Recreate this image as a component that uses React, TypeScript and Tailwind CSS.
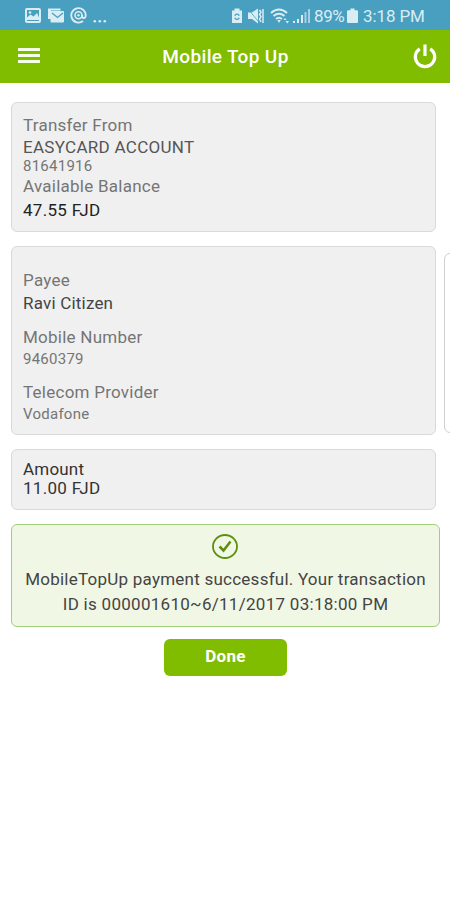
import React from 'react';
import clsx from 'clsx';

type RowProps = {
  text: string;
  className: string;
};

const Row: React.FC<RowProps> = ({ text, className }) => (
  <div className="flex">
    <span className={clsx('whitespace-nowrap', className)}>{text}</span>
  </div>
);

const Card: React.FC<{ className?: string; children: React.ReactNode }> = ({ className, children }) => (
  <section className={clsx('ml-[11px] w-[425px] shrink-0 rounded-md border border-[#d9d9d9] bg-[#f0f0f0] pl-[11px]', className)}>
    {children}
  </section>
);

const StatusBar: React.FC = () => (
  <div className="flex h-[30px] items-center bg-[#499fbf] text-[#d9edf4]">
    <svg className="ml-[25px]" width="16" height="15" viewBox="0 0 16 15" fill="none" stroke="currentColor">
      <rect x="1" y="1" width="14" height="13" rx="1" strokeWidth="2" />
      <path d="M2 12V9.500l3.500-3 3 2L12 5l2 4.500V12z" fill="currentColor" stroke="none" />
      <circle cx="5" cy="4.500" r="1.300" fill="currentColor" stroke="none" />
    </svg>
    <svg className="ml-[7px]" width="16" height="15" viewBox="0 0 16 15" fill="none">
      <path d="M0 0.500h12.500v2H3v8.500H0z" fill="currentColor" />
      <rect x="2.500" y="3" width="13.500" height="11.500" rx="1" fill="currentColor" />
      <path d="M4 5l5.500 4.500L15 5" stroke="#499fbf" strokeWidth="1.300" />
    </svg>
    <svg className="ml-[6px]" width="17" height="17" viewBox="0 0 17 17" fill="none" stroke="currentColor" strokeWidth="1.900">
      <path d="M13 14A7.200 7.200 0 1 1 15.700 8.500q-.2 3-2.400 2.500-1.500-.3-1.300-3" />
      <circle cx="8.500" cy="8.300" r="3.500" strokeWidth="1.600" />
      <circle cx="8.500" cy="8.300" r="1.200" fill="currentColor" stroke="none" />
    </svg>
    <svg className="mt-px ml-[6px]" width="14" height="15" viewBox="0 0 14 15" fill="currentColor">
      <circle cx="1.800" cy="13.200" r="1.300" />
      <circle cx="6.800" cy="13.200" r="1.300" />
      <circle cx="11.800" cy="13.200" r="1.300" />
    </svg>
    <svg className="mt-px ml-[124px]" width="12" height="16" viewBox="0 0 12 16" fill="currentColor">
      <path d="M3.500 0.500h5v2H11v12.500H1V2.500h2.500z" />
      <path d="M3.800 7.800a2.300 2.300 0 0 1 4.400 0M3.800 9.800a2.300 2.300 0 0 0 4.400 0" fill="none" stroke="#499fbf" strokeWidth="1.300" />
    </svg>
    <svg className="mt-px ml-[4px]" width="17" height="16" viewBox="0 0 17 16" fill="none" stroke="currentColor">
      <path d="M1 4.500h4l6-4v15L5 11H1z" fill="currentColor" stroke="none" />
      <path d="M1 1l10 12" stroke="#499fbf" strokeWidth="0.800" />
      <path d="M12.500 2l1.500 2-1.500 2.500 1.500 2-1.500 2.500 1.500 3M16 1v14" strokeWidth="1.500" />
    </svg>
    <svg className="mt-px ml-[6px]" width="20" height="16" viewBox="0 0 20 16" fill="none" stroke="currentColor" strokeWidth="1.900">
      <path d="M1 5q8-7 16 0M3.500 8q5.500-4.500 11 0M6 11q3-2.500 6 0" />
      <path d="M7.300 12h3.400L9 15zM13.500 12l1.500-2 1.500 2zM15.500 13h3.500l-1.700 2.500z" fill="currentColor" stroke="none" />
    </svg>
    <svg className="mt-px ml-[3px]" width="17" height="16" viewBox="0 0 17 16" fill="currentColor">
      <path d="M0 13h2v2H0zM4 11h2v4H4zM8 7h2v8H8z" />
      <path d="M11.500 4h2v11h-2zM15 1h2v14h-2z" opacity=".65" />
    </svg>
    <span className="mt-[2px] ml-[4px] w-[31px] whitespace-nowrap text-[17px] leading-none tracking-[-0.4px]">89%</span>
    <svg className="mt-px ml-[2px]" width="11" height="16" viewBox="0 0 11 16" fill="currentColor">
      <path d="M3.500 0.500h4v1.700H10q1 0 1 1V14q0 1-1 1H1q-1 0-1-1V3.200q0-1 1-1h2.500z" />
    </svg>
    <span className="mt-[2px] ml-[5px] whitespace-nowrap text-[17px] leading-none tracking-[-0.1px]">3:18 PM</span>
  </div>
);

const Header: React.FC = () => (
  <header className="flex h-[53px] items-center justify-between bg-[#80bc00] pr-[13px] pl-[18px] text-white">
    <button aria-label="Menu" className="mt-[-2px] flex w-[22px] flex-col gap-[3px]">
      <span className="h-[3px] bg-[#f5ffe5]" />
      <span className="h-[3px] bg-[#f5ffe5]" />
      <span className="h-[3px] bg-[#f5ffe5]" />
    </button>
    <h1 className="mr-[2px] text-[19px] leading-none font-medium tracking-[0.35px] whitespace-nowrap">Mobile Top Up</h1>
    <button aria-label="Log out">
      <svg width="24" height="25" viewBox="0 0 24 25" fill="none" stroke="currentColor" strokeWidth="3.200">
        <path d="M6.800 4.800a9.700 9.700 0 1 0 10.400 0M12 0.500v11.500" />
      </svg>
    </button>
  </header>
);

const App: React.FC = () => {
  const label = 'text-[17px] text-[#757575] tracking-[0.25px]';
  const small = 'text-[15px] text-[#757575] tracking-[0.25px]';

  return (
    <div className="h-[900px] w-[450px] overflow-hidden bg-white font-[Roboto,sans-serif]">
      <StatusBar />
      <Header />
      <main className="pt-[19px]">
        <Card className="h-[130px] pt-[11px]">
          <Row text="Transfer From" className={clsx(label, 'leading-[22px]')} />
          <Row text="EASYCARD ACCOUNT" className="text-[17px] leading-[23px] tracking-[0.3px] text-[#555]" />
          <Row text="81641916" className={clsx(small, 'leading-[15px]')} />
          <Row text="Available Balance" className={clsx(label, 'leading-[25px]')} />
          <Row text="47.55 FJD" className="text-[17px] leading-[22px] tracking-[0.3px] text-[#222]" />
        </Card>

        <div className="mt-[14px] flex items-start">
          <Card className="h-[189px] pt-[22px]">
            <Row text="Payee" className={clsx(label, 'leading-[23px]')} />
            <Row text="Ravi Citizen" className="text-[17px] leading-[23px] tracking-[0.2px] text-[#444]" />
            <Row text="Mobile Number" className={clsx(label, 'mt-[10px] leading-[24px]')} />
            <Row text="9460379" className={clsx(small, 'leading-[20px]')} />
            <Row text="Telecom Provider" className={clsx(label, 'mt-[11px] leading-[24px]')} />
            <Row text="Vodafone" className={clsx(small, 'leading-[20px]')} />
          </Card>
          <div className="mt-[7px] ml-[8px] h-[180px] w-[40px] shrink-0 rounded-md border border-[#d0d0d0]" />
        </div>

        <Card className="mt-[14px] h-[61px] pt-[9px]">
          <Row text="Amount" className="text-[17px] leading-[20px] tracking-[0.2px] text-[#333]" />
          <Row text="11.00 FJD" className="text-[17px] leading-[19px] tracking-[0.3px] text-[#333]" />
        </Card>

        <section className="mt-[14px] ml-[11px] flex h-[103px] w-[429px] flex-col items-center rounded-md border border-[#a1cf7c] bg-[#f1f7e5] pt-[9px] text-[17px] text-[#444]">
          <svg className="mr-px" width="26" height="25" viewBox="0 0 26 25" fill="none" stroke="#5d8f0c">
            <ellipse cx="13" cy="12.500" rx="12" ry="11.500" strokeWidth="1.800" />
            <path d="M7.500 12.500l4 4L18.500 7.500" strokeWidth="2.500" />
          </svg>
          <span className="mt-[8px] leading-[25px] tracking-[0.24px] whitespace-nowrap">MobileTopUp payment successful. Your transaction</span>
          <span className="leading-[25px] tracking-[0.28px] whitespace-nowrap">ID is 000001610~6/11/2017 03:18:00 PM</span>
        </section>

        <button className="mt-[12px] ml-[164px] h-[37px] w-[123px] rounded-md bg-[#80bc00] pb-[2px] text-[17px] font-bold tracking-[0.3px] text-white">
          Done
        </button>
      </main>
    </div>
  );
};

export default App;
